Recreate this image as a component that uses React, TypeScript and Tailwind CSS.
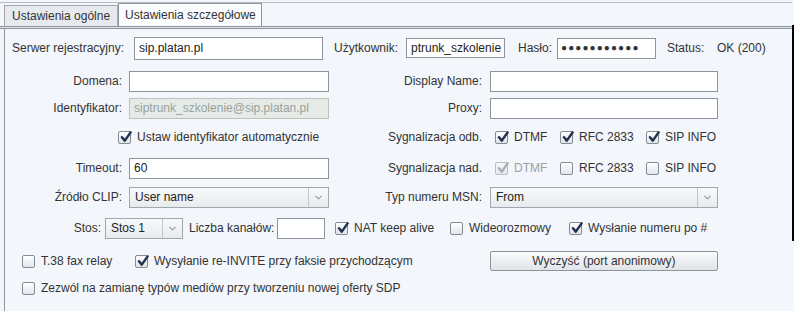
import { ChevronDown } from 'lucide-react';

function Check({ checked = false, disabled = false }: { checked?: boolean; disabled?: boolean }) {
  return (
    <span
      className={`relative inline-block h-[13px] w-[13px] shrink-0 rounded-[2px] border bg-gradient-to-b ${
        disabled ? 'border-[#b9bec4] from-[#f4f6f8] to-[#e6e9ec]' : 'border-[#858b93] from-[#ffffff] to-[#e1e5ea]'
      }`}
    >
      {checked && (
        <svg className="absolute left-[1px] top-[-1px]" width="12" height="12" viewBox="0 0 12 12">
          <path
            d="M2 6.2 L4.8 9.6 L10.6 1.4"
            fill="none"
            stroke={disabled ? '#a9b0b8' : '#22324f'}
            strokeWidth="2.5"
            strokeLinecap="round"
            strokeLinejoin="round"
          />
        </svg>
      )}
    </span>
  );
}

function CheckItem({ label, checked, disabled, w }: { label: string; checked?: boolean; disabled?: boolean; w?: string }) {
  return (
    <div className={`flex items-center gap-[6px] ${w ?? ''}`}>
      <Check checked={checked} disabled={disabled} />
      <span className={disabled ? 'text-[#9aa1a8]' : ''}>{label}</span>
    </div>
  );
}

function TextInput({ w, value, disabled, h = 'h-[21px]' }: { w: string; value?: string; disabled?: boolean; h?: string }) {
  return (
    <div
      className={`${w} ${h} flex items-center overflow-hidden border pl-[4px] ${
        disabled ? 'border-[#bcc3bd] bg-[#e6ebe7] text-[#98a29c]' : 'border-[#8e949b] bg-white text-[#222]'
      }`}
    >
      {value}
    </div>
  );
}

function Select({ w, value }: { w: string; value: string }) {
  return (
    <div className={`${w} flex h-[21px] border border-[#a2a7ae] bg-gradient-to-b from-[#f8f9fa] to-[#e8ebee]`}>
      <span className="flex flex-1 items-center pl-[5px] text-[#222]">{value}</span>
      <span className="flex w-[20px] items-center justify-center border-l border-[#c3c7cc]">
        <ChevronDown size={11} strokeWidth={2.2} color="#9097a0" />
      </span>
    </div>
  );
}

function Row({ children, className = '' }: { children: React.ReactNode; className?: string }) {
  return <div className={`flex h-[22px] items-center ${className}`}>{children}</div>;
}

export default function App() {
  return (
    <div className="flex h-[311px] w-[794px] bg-[#f3f6fa] font-['Liberation_Sans',Arial,sans-serif] text-[12px] text-[#333]">
      <div className="flex flex-1 flex-col">
        {/* tab strip */}
        <div className="pt-[2px]">
          <div className="flex h-[24px] items-end border-t border-[#b8bdc4] pl-[4px]">
            <div className="h-[21px] w-[114px] border border-b-0 border-[#a3a8af] bg-[#e6eaef] pl-[7px] leading-[20px]">
              Ustawienia ogólne
            </div>
            <div className="h-[23px] w-[144px] border border-b-0 border-[#8f959d] bg-[#fbfcfd] pl-[6px] leading-[22px]">
              Ustawienia szczegółowe
            </div>
          </div>
        </div>
        <div className="h-[3px] border-y border-[#8f959d] bg-[#dfe3e8]" />

        {/* panel */}
        <div className="ml-[4px] flex flex-1 flex-col border-l border-[#8f959d]">
          <Row className="mt-[8px]">
            <span className="w-[129px] pl-[7px]">Serwer rejestracyjny:</span>
            <TextInput w="w-[189px]" h="h-[23px]" value="sip.platan.pl" />
            <span className="ml-[11px] w-[72px]">Użytkownik:</span>
            <TextInput w="w-[99px]" h="h-[20px]" value="ptrunk_szkolenie" />
            <span className="ml-[13px] w-[39px]">Hasło:</span>
            <div className="flex h-[21px] w-[99px] items-center overflow-hidden border border-[#8e949b] bg-white pl-[3px] text-[10px] leading-none tracking-[1.1px] text-[#333]">
              ●●●●●●●●●●●
            </div>
            <span className="ml-[11px] w-[50px]">Status:</span>
            <span>OK (200)</span>
          </Row>

          <Row className="mt-[11px]">
            <span className="w-[117px] text-right">Domena:</span>
            <span className="ml-[7px]">
              <TextInput w="w-[200px]" />
            </span>
            <span className="w-[153px] text-right">Display Name:</span>
            <span className="ml-[8px]">
              <TextInput w="w-[228px]" />
            </span>
          </Row>

          <Row className="mt-[5px]">
            <span className="w-[117px] text-right">Identyfikator:</span>
            <span className="ml-[7px]">
              <TextInput w="w-[200px]" value="siptrunk_szkolenie@sip.platan.pl" disabled />
            </span>
            <span className="w-[153px] text-right">Proxy:</span>
            <span className="ml-[8px]">
              <TextInput w="w-[228px]" />
            </span>
          </Row>

          <Row className="mt-[7px]">
            <div className="ml-[113px] w-[211px]">
              <CheckItem label="Ustaw identyfikator automatycznie" checked />
            </div>
            <span className="w-[153px] text-right">Sygnalizacja odb.</span>
            <div className="ml-[13px] flex">
              <CheckItem label="DTMF" checked w="w-[65px]" />
              <CheckItem label="RFC 2833" checked w="w-[86px]" />
              <CheckItem label="SIP INFO" checked />
            </div>
          </Row>

          <Row className="mt-[9px]">
            <span className="w-[117px] text-right">Timeout:</span>
            <span className="ml-[7px]">
              <TextInput w="w-[200px]" value="60" />
            </span>
            <span className="w-[153px] text-right">Sygnalizacja nad.</span>
            <div className="ml-[13px] flex">
              <CheckItem label="DTMF" checked disabled w="w-[65px]" />
              <CheckItem label="RFC 2833" w="w-[86px]" />
              <CheckItem label="SIP INFO" />
            </div>
          </Row>

          <Row className="mt-[7px]">
            <span className="w-[117px] text-right">Źródło CLIP:</span>
            <span className="ml-[7px]">
              <Select w="w-[200px]" value="User name" />
            </span>
            <span className="w-[153px] text-right">Typ numeru MSN:</span>
            <span className="ml-[8px]">
              <Select w="w-[228px]" value="From" />
            </span>
          </Row>

          <Row className="mt-[9px]">
            <span className="w-[96px] text-right">Stos:</span>
            <span className="ml-[4px]">
              <Select w="w-[78px]" value="Stos 1" />
            </span>
            <span className="ml-[6px] w-[88px]">Liczba kanałów:</span>
            <TextInput w="w-[48px]" />
            <div className="ml-[10px] flex">
              <CheckItem label="NAT keep alive" checked w="w-[115px]" />
              <CheckItem label="Wideorozmowy" w="w-[119px]" />
              <CheckItem label="Wysłanie numeru po #" checked />
            </div>
          </Row>

          <Row className="mt-[11px]">
            <div className="ml-[17px] flex">
              <CheckItem label="T.38 fax relay" w="w-[113px]" />
              <CheckItem label="Wysyłanie re-INVITE przy faksie przychodzącym" checked w="w-[355px]" />
            </div>
            <button className="h-[20px] w-[228px] rounded-[2px] border border-[#8d939a] bg-gradient-to-b from-[#fafafb] to-[#e1e4e8] text-[12px] text-[#333]">
              Wyczyść (port anonimowy)
            </button>
          </Row>

          <Row className="mt-[5px]">
            <div className="ml-[17px]">
              <CheckItem label="Zezwól na zamianę typów mediów przy tworzeniu nowej oferty SDP" />
            </div>
          </Row>
        </div>
      </div>
      <div className="mt-[25px] h-[216px] w-[2px] bg-black" />
    </div>
  );
}
